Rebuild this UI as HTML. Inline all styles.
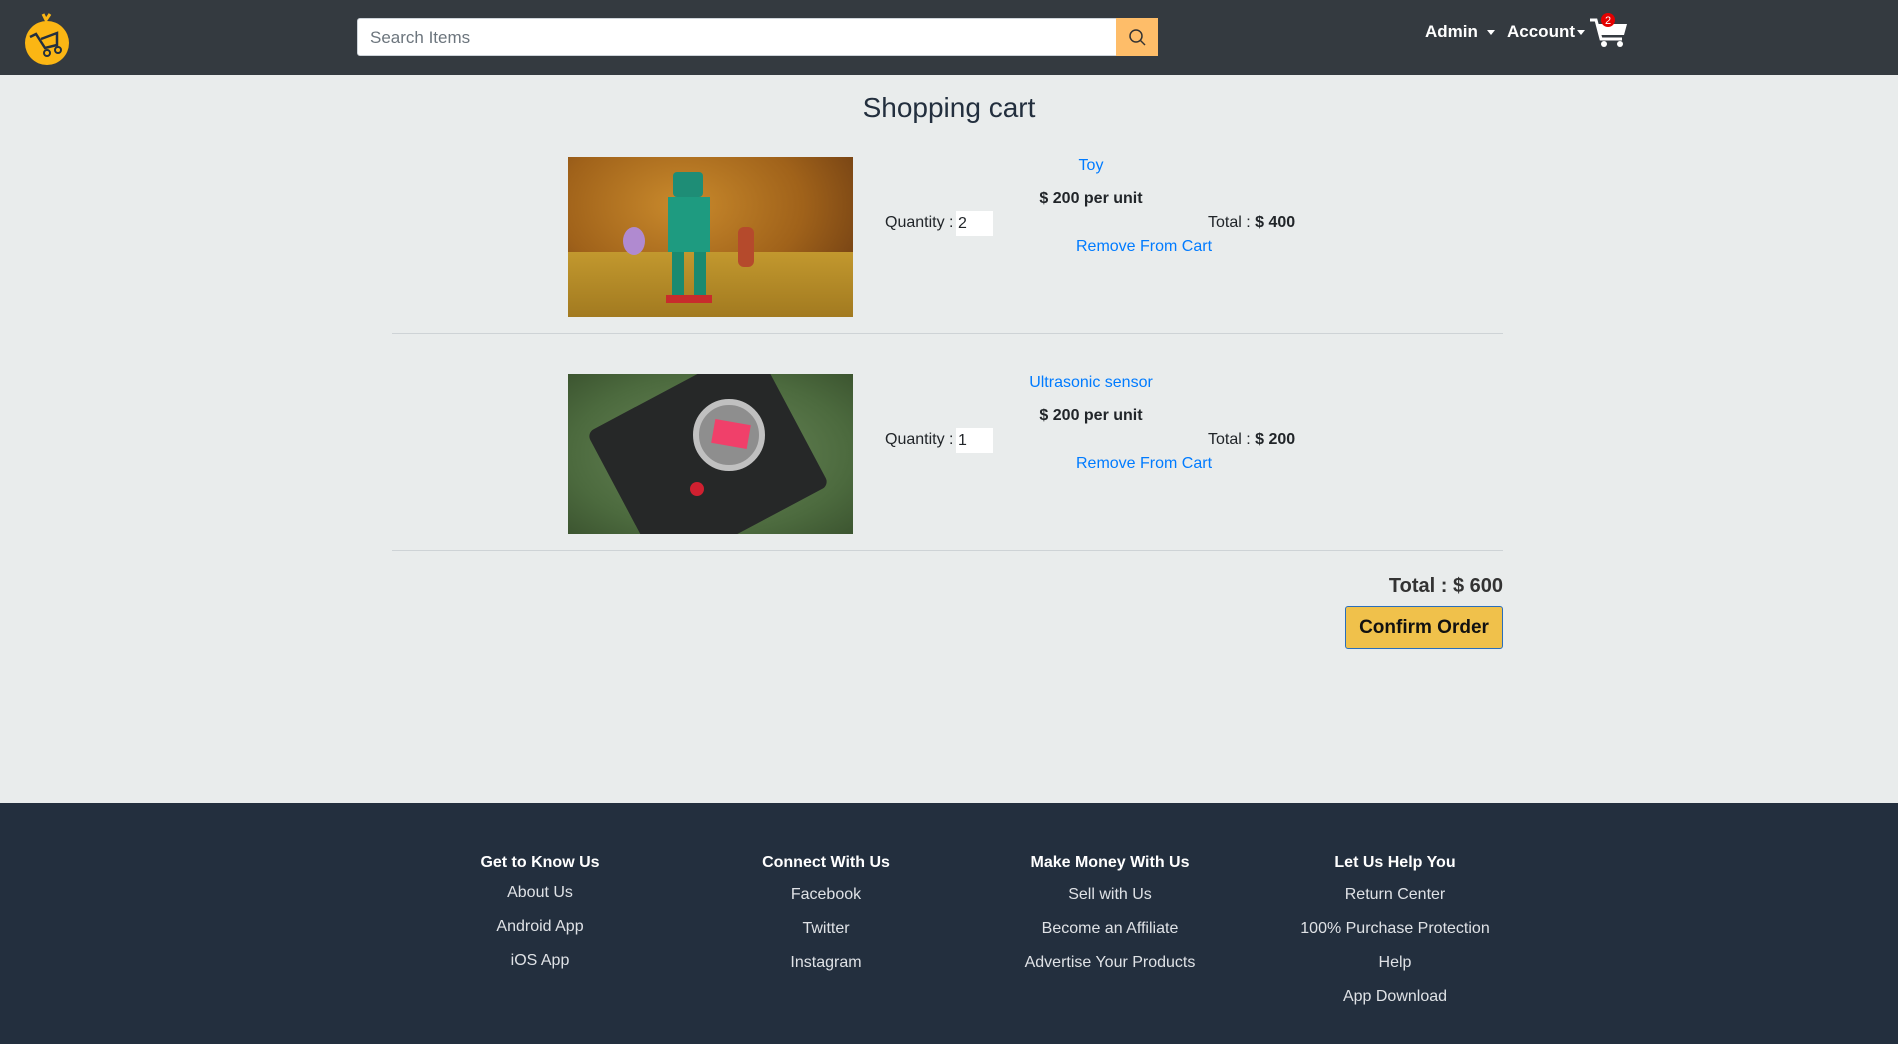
<!DOCTYPE html>
<html><head><meta charset="utf-8"><style>
*{box-sizing:border-box;margin:0;padding:0}
body{width:1898px;height:1044px;background:#e9ecec;font-family:"Liberation Sans",sans-serif;color:#212529;position:relative;overflow:hidden;font-size:16px}
.abs{position:absolute}
header{position:absolute;left:0;top:0;width:1898px;height:75px;background:#343a40}
.search{left:357px;top:18px;width:760px;height:38px;background:#fff;border:1px solid #ced4da;border-radius:3px 0 0 3px;color:#6c757d;font-size:17px;padding:9px 12px}
.sbtn{left:1116px;top:18px;width:42px;height:38px;background:#febd69}
.nav{color:#fff;font-weight:bold;font-size:17px;top:22px}
.car{display:inline-block;border-left:4px solid transparent;border-right:4px solid transparent;border-top:5px solid #fff;vertical-align:middle;margin-left:6px}
.link{color:#007bff}
.c{text-align:center}
hr{position:absolute;left:392px;width:1111px;border:0;border-top:1px solid #ced3d6}
.foot{position:absolute;left:0;top:803px;width:1898px;height:241px;background:#232f3e;color:#dde}
.col{position:absolute;width:300px;text-align:center;color:#dfe2e6;font-size:16px}
.col b{display:block;color:#fff;font-size:16px;margin-bottom:12px}
.col div{height:34px}
.img{overflow:hidden}
</style></head><body>
<header>
<svg class="abs" style="left:20px;top:12px" width="54" height="54" viewBox="0 0 54 54">
<path d="M23 2 L26 8 L30 2" stroke="#fbb614" stroke-width="3" fill="none"/>
<circle cx="27" cy="31" r="22" fill="#fbb614"/>
<path d="M10 25 L16 22 L25 36 L37 33 L37 21 L21 27" stroke="#232f3e" stroke-width="2.5" fill="none"/>
<circle cx="27" cy="41" r="3" stroke="#232f3e" stroke-width="2" fill="none"/>
<circle cx="38" cy="38" r="3" stroke="#232f3e" stroke-width="2" fill="none"/>
</svg>
<div class="abs search">Search Items</div>
<div class="abs sbtn"><svg width="42" height="38" viewBox="0 0 42 38"><circle cx="20" cy="18" r="6" stroke="#333" stroke-width="1.5" fill="none"/><path d="M24.5 22.5 L29 27" stroke="#333" stroke-width="1.5"/></svg></div>
<div class="abs nav" style="left:1425px">Admin<span class="car" style="margin-left:9px"></span></div>
<div class="abs nav" style="left:1507px">Account<span class="car" style="margin-left:2px"></span></div>
<svg class="abs" style="left:1589px;top:13px" width="40" height="36" viewBox="0 0 40 36">
<path d="M1 7 L7 7 L12 26 L33 26" stroke="#fff" stroke-width="3" fill="none"/>
<path d="M8 11 L38 11 L35 22 L11 22 Z" fill="#fff"/>
<circle cx="15" cy="31" r="3" fill="#fff"/><circle cx="31" cy="31" r="3" fill="#fff"/>
<circle cx="19" cy="7" r="7" fill="#e40000"/>
<text x="19" y="11" font-size="11" fill="#fff" text-anchor="middle" font-family="Liberation Sans">2</text>
</svg>
</header>
<div class="abs c" style="left:0;width:1898px;top:92px;font-size:28px;color:#232f3e">Shopping cart</div>

<div class="abs img" style="left:568px;top:157px;width:285px;height:160px;background:radial-gradient(ellipse at 40% 30%,#c98a2c,#a0621a 50%,#5a2e10 100%)">
<div class="abs" style="left:0;top:95px;width:285px;height:65px;background:linear-gradient(#c2982e,#a27a20)"></div>
<div class="abs" style="left:55px;top:70px;width:22px;height:28px;border-radius:50%;background:#b08ad0"></div>
<div class="abs" style="left:105px;top:15px;width:30px;height:25px;background:#1e8d76;border-radius:4px"></div>
<div class="abs" style="left:100px;top:40px;width:42px;height:55px;background:#1e9b80"></div>
<div class="abs" style="left:104px;top:95px;width:12px;height:45px;background:#1a8a70"></div>
<div class="abs" style="left:126px;top:95px;width:12px;height:45px;background:#1a8a70"></div>
<div class="abs" style="left:98px;top:138px;width:46px;height:8px;background:#c82c2c"></div>
<div class="abs" style="left:170px;top:70px;width:16px;height:40px;background:#b54a2c;border-radius:6px"></div>
</div>

<div class="abs link c" style="left:991px;width:200px;top:157px">Toy</div>
<div class="abs c" style="left:991px;width:200px;top:190px;font-weight:bold">$ 200 per unit</div>
<div class="abs" style="left:885px;top:214px">Quantity :</div>
<div class="abs" style="left:956px;top:211px;width:37px;height:25px;background:#fff;padding:4px 2px">2</div>
<div class="abs" style="left:1208px;top:214px">Total : <b>$ 400</b></div>
<div class="abs link" style="left:1076px;top:238px">Remove From Cart</div>
<hr style="top:333px">

<div class="abs img" style="left:568px;top:374px;width:285px;height:160px;background:radial-gradient(ellipse at 50% 50%,#6d8a5c,#4c6a3e 70%,#3c5530)">
<div class="abs" style="left:45px;top:5px;width:190px;height:160px;background:#262828;transform:rotate(-28deg);transform-origin:center;border-radius:8px"></div>
<div class="abs" style="left:125px;top:25px;width:72px;height:72px;border-radius:50%;background:#8e8e8e;border:6px solid #c0c0c0"></div>
<div class="abs" style="left:145px;top:48px;width:36px;height:24px;background:#f0406a;transform:rotate(10deg)"></div>
<div class="abs" style="left:122px;top:108px;width:14px;height:14px;border-radius:50%;background:#d02030"></div>
</div>

<div class="abs link c" style="left:991px;width:200px;top:374px">Ultrasonic sensor</div>
<div class="abs c" style="left:991px;width:200px;top:407px;font-weight:bold">$ 200 per unit</div>
<div class="abs" style="left:885px;top:431px">Quantity :</div>
<div class="abs" style="left:956px;top:428px;width:37px;height:25px;background:#fff;padding:4px 2px">1</div>
<div class="abs" style="left:1208px;top:431px">Total : <b>$ 200</b></div>
<div class="abs link" style="left:1076px;top:455px">Remove From Cart</div>
<hr style="top:550px">

<div class="abs" style="right:395px;top:575px;font-size:20px;font-weight:bold;color:#333">Total : $ 600</div>
<div class="abs c" style="left:1345px;top:606px;width:158px;height:43px;background:#f0c14b;border:1px solid #2a6ebb;border-radius:3px;font-weight:bold;font-size:19px;padding-top:10px;color:#111">Confirm Order</div>

<div class="foot">
<div class="col" style="left:390px;top:51px"><b>Get to Know Us</b><div>About Us</div><div>Android App</div><div>iOS App</div></div>
<div class="col" style="left:676px;top:51px"><b style="margin-bottom:14px">Connect With Us</b><div>Facebook</div><div>Twitter</div><div>Instagram</div></div>
<div class="col" style="left:960px;top:51px"><b style="margin-bottom:14px">Make Money With Us</b><div>Sell with Us</div><div>Become an Affiliate</div><div>Advertise Your Products</div></div>
<div class="col" style="left:1245px;top:51px"><b style="margin-bottom:14px">Let Us Help You</b><div>Return Center</div><div>100% Purchase Protection</div><div>Help</div><div>App Download</div></div>
</div>
</body></html>
